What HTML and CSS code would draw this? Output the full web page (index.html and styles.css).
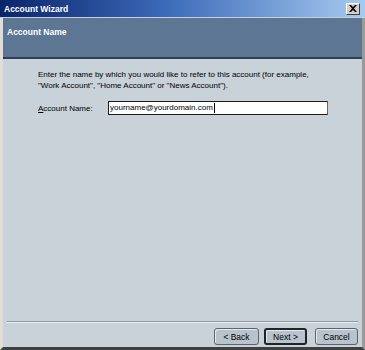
FILE: index.html
```html
<!DOCTYPE html>
<html>
<head>
<meta charset="utf-8">
<link rel="stylesheet" href="styles.css">
</head>
<body>
<div class="window">
  <div class="titlebar">
    <span class="title">Account Wizard</span>
    <span class="close"><svg width="8" height="7" viewBox="0 0 8 7"><path d="M0 0h2l2 2 2-2h2L5 3.5 8 7H6L4 5 2 7H0l3-3.5z" fill="#000"/></svg></span>
  </div>
  <div class="header">Account Name</div>
  <div class="content">
    <p class="intro">Enter the name by which you would like to refer to this account (for example, "Work Account", "Home Account" or "News Account").</p>
    <div class="field">
      <label class="label"><u>A</u>ccount Name:</label>
      <div class="input">yourname@yourdomain.com<span class="caret"></span></div>
    </div>
  </div>
  <div class="sep"></div>
  <div class="buttons">
    <button class="btn">&lt; Back</button>
    <button class="btn default">Next &gt;</button>
    <button class="btn cancel">Cancel</button>
  </div>
</div>
</body>
</html>
```
FILE: styles.css
```css
html, body { margin: 0; padding: 0; }
body { font-family: "Liberation Sans", Arial, sans-serif; font-size: 8px; background: #d4d0c8; }
.window {
  width: 365px; height: 350px; box-sizing: border-box;
  display: flex; flex-direction: column;
  background: #c9d1d9;
  border-left: 3px solid #e2ddd3;
  border-right: 3px solid #9a9a98;
  border-bottom: 3px solid #3f4040;
}
.titlebar {
  height: 17px; flex: none;
  display: flex; align-items: center; justify-content: space-between;
  background: linear-gradient(to right, #0a246a, #3a6ab8 45%, #a6caf0);
  margin: 0 -3px; padding: 0 3px 0 4px;
  border-bottom: 1px solid #c9cfd6;
}
.title { color: #fff; font-weight: bold; font-size: 8.5px; }
.close {
  width: 14px; height: 12px; box-sizing: border-box;
  display: flex; align-items: center; justify-content: center;
  background: #d4d0c8;
  border: 1px solid; border-color: #fff #404040 #404040 #fff;
  margin-right: 2px;
}
.header {
  flex: none; height: 41px; box-sizing: border-box;
  background: #5c7694;
  border-bottom: 2px solid #2e3f55;
  color: #fff; font-weight: bold; font-size: 8.5px; padding: 9px 0 0 4px;
}
.content { flex: 1; padding: 10px 0 0 35px; }
.intro { margin: 0; width: 285px; line-height: 11px; color: #000; }
.field { display: flex; align-items: center; margin-top: 10px; }
.label { width: 70px; }
.input {
  width: 220px; height: 14px; box-sizing: border-box;
  background: #fff; border: 1px solid #1c1c1c;
  border-right-color: #6a6a6a;
  padding: 0 1px; line-height: 12px;
  display: flex; align-items: center;
}
.caret { width: 1px; height: 10px; background: #000; margin-left: 1px; }
.sep { flex: none; height: 1px; background: #8d99a6; border-bottom: 1px solid #e8ecef; margin: 0 4px 0 4px; }
.buttons { flex: none; display: flex; justify-content: flex-end; gap: 5px; padding: 5px 4px 2px 0; }
.btn {
  font: inherit; font-size: 8.5px;
  width: 45px; height: 17px; padding: 0;
  background: #b9c3ce; color: #000;
  border: 1px solid #5a6370; border-radius: 3px;
  box-shadow: inset 1px 1px 0 #e6eaee;
}
.btn.default { border: 2px solid #1e242b; width: 43px; }
.btn.cancel { width: 43px; margin-left: 3px; }
```
